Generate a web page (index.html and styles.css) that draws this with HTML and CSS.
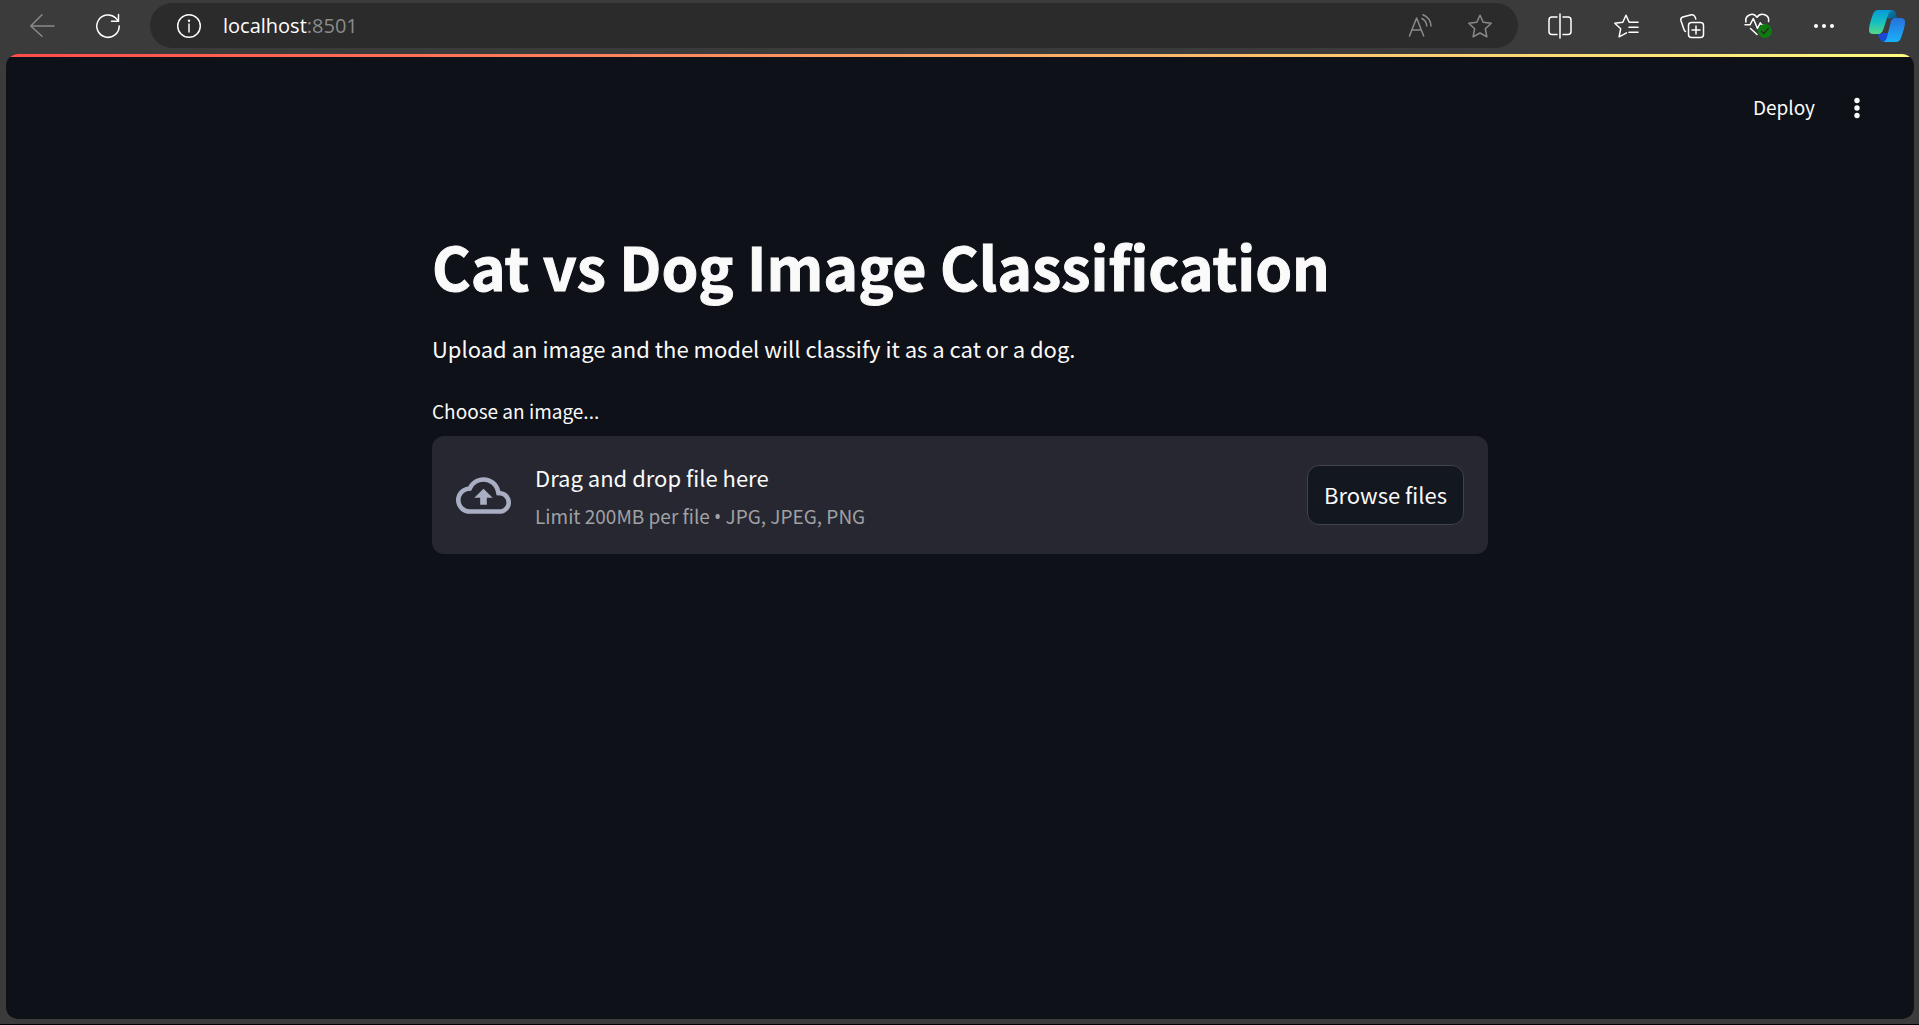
FILE: index.html
```html
<!DOCTYPE html>
<html lang="en">
<head>
<meta charset="utf-8">
<meta name="viewport" content="width=device-width, initial-scale=1">
<title>Cat vs Dog Image Classification</title>
<link rel="stylesheet" href="styles.css">
</head>
<body>
<header class="browser-bar">
  <button class="tool dim" type="button" aria-label="Back">
    <svg class="icon" viewBox="0 0 24 24"><path d="M24 12H.8M12 .8.8 12 12 22.200"/></svg>
  </button>
  <button class="tool" type="button" aria-label="Refresh">
    <svg class="icon" viewBox="0 0 24 24"><path d="M23.200 12A11.200 11.200 0 1 1 19.700 4L22.500 7M22.500.5V7.300H15.500"/></svg>
  </button>
  <div class="address">
    <svg class="icon" viewBox="0 0 24 24"><circle cx="12" cy="12" r="11.300"/><path d="M12 10v8"/><circle class="solid" cx="12" cy="6.700" r="1.200"/></svg>
    <span class="url">localhost<span class="port">:8501</span></span>
    <button class="tool in-address" type="button" aria-label="Read aloud">
      <svg class="icon" viewBox="0 0 24 24"><path d="M1.500 22 8.600 4 15.700 22M4 16H13.200M14 4.500Q18.500 7 18.800 12M15 .8Q22.500 4 23 12"/></svg>
    </button>
    <button class="tool in-address" type="button" aria-label="Add to favorites">
      <svg class="icon" viewBox="0 0 24 24"><path d="M12 1.200 15.200 8.300 23.200 9.200 17.300 14.700 18.900 22.800 12 19 5.100 22.800 6.700 14.700.8 9.200 8.800 8.300Z"/></svg>
    </button>
  </div>
  <nav class="tools" aria-label="Browser tools">
    <button class="tool" type="button" aria-label="Split screen">
      <svg class="icon" viewBox="0 0 24 24"><path d="M12 0V24M9 3H4Q1 3 1 6V17.500Q1 20.500 4 20.500H9M15 3H20Q23 3 23 6V17.500Q23 20.500 20 20.500H15"/></svg>
    </button>
    <button class="tool" type="button" aria-label="Favorites">
      <svg class="icon" viewBox="0 0 24 24"><path d="M12.500 18.800 5.100 22.800 6.700 14.700.8 9.200 8.800 8.300 12 1.200 15.200 8.300H24M15 13.200H24M15 18.200H24"/></svg>
    </button>
    <button class="tool" type="button" aria-label="Collections">
      <svg class="icon" viewBox="0 0 24 24"><rect x="8.500" y="8.500" width="15" height="15" rx="3"/><path d="M16 12V20M12 16H20M5.500 17.500Q4.500 17 4 15.500L.9 6.500Q.2 4 2.800 3L11.500.8Q14 .3 15 2.800L15.800 5"/></svg>
    </button>
    <button class="tool" type="button" aria-label="Browser essentials">
      <svg class="icon wide" viewBox="0 0 28 28"><path d="M2 10C.5 3.500 9-.5 13 5.200 17-.5 26 3 24.500 9.500M1 12.800H6L9.300 6.500 13.500 16.500 16.300 10.800 17.800 13H20M6.500 16.500 13 22.500"/><circle class="badge" cx="21" cy="19" r="7"/><path class="check" d="m17.500 19.200 2.300 2.300 4.500-5"/></svg>
    </button>
    <button class="tool" type="button" aria-label="Settings and more">
      <svg class="icon" viewBox="0 0 24 24"><g class="solid"><circle cx="4" cy="12" r="2"/><circle cx="12" cy="12" r="2"/><circle cx="20" cy="12" r="2"/></g></svg>
    </button>
    <button class="tool in-address" type="button" aria-label="Copilot">
      <svg class="copilot" viewBox="0 0 36 32">
        <defs>
          <linearGradient id="cp-left" x1="0" y1="0" x2="0" y2="1"><stop offset="0" stop-color="#079ad8"/><stop offset=".5" stop-color="#15bfc0"/><stop offset="1" stop-color="#55d985"/></linearGradient>
          <linearGradient id="cp-right" x1="0" y1="0" x2="0" y2="1"><stop offset="0" stop-color="#2870dc"/><stop offset="1" stop-color="#18b2fa"/></linearGradient>
          <linearGradient id="cp-top" x1="0" y1="0" x2="1" y2="1"><stop offset="0" stop-color="#0a86bd"/><stop offset="1" stop-color="#07557d"/></linearGradient>
        </defs>
        <path fill="url(#cp-top)" d="M18 0H23Q26 0 27 4L28 8H24Q22 8 20.500 9L18 7Z"/>
        <path fill="#1a49d6" d="M8.500 24Q13 24 14.500 23H19L18 32H15Q12 32 11 29Z"/>
        <path fill="url(#cp-left)" d="M9 0H23Q20 1 19 5L14.500 19Q13 24 9 24H4Q0 24 0 20 0 15 4 4 5.500 0 9 0Z"/>
        <path fill="url(#cp-right)" d="M26 8H32Q36 8 36 12 36 17 32 28 30.500 32 27 32H14.500Q17 31 18 27L21.500 13Q22.500 8 26 8Z"/>
      </svg>
    </button>
  </nav>
</header>

<div class="page">
  <div class="decoration"></div>
  <div class="toolbar">
    <button class="text-button" type="button">Deploy</button>
    <button class="menu-button" type="button" aria-label="Main menu">
      <svg class="menu-dots" viewBox="0 0 6 22"><circle cx="3" cy="3.500" r="2.700"/><circle cx="3" cy="11" r="2.700"/><circle cx="3" cy="18.500" r="2.700"/></svg>
    </button>
  </div>
  <main class="content">
    <h1>Cat vs Dog Image Classification</h1>
    <p class="intro">Upload an image and the model will classify it as a cat or a dog.</p>
    <label class="upload-label" for="image-file">Choose an image...</label>
    <section class="dropzone">
      <svg class="cloud" viewBox="0 0 24 24" aria-hidden="true"><path d="M19.350 10.040A7.490 7.490 0 0 0 12 4C9.110 4 6.600 5.640 5.350 8.040A5.994 5.994 0 0 0 0 14c0 3.310 2.690 6 6 6h13c2.760 0 5-2.240 5-5 0-2.640-2.050-4.780-4.650-4.960zM19 18H6c-2.210 0-4-1.790-4-4 0-2.050 1.530-3.760 3.560-3.970l1.070-.11.5-.95A5.469 5.469 0 0 1 12 6c2.620 0 4.880 1.860 5.390 4.430l.3 1.500 1.530.11A2.980 2.980 0 0 1 22 15c0 1.650-1.350 3-3 3zM8 13h2.550v3h2.900v-3H16l-4-4z"/></svg>
      <div class="instructions">
        <span class="primary">Drag and drop file here</span>
        <small class="limit">Limit 200MB per file <span class="bullet">•</span> JPG, JPEG, PNG</small>
      </div>
      <input class="file-input" id="image-file" type="file" accept=".jpg,.jpeg,.png" hidden>
      <button class="browse" type="button" onclick="document.getElementById('image-file').click()">Browse files</button>
    </section>
  </main>
</div>
</body>
</html>
```
FILE: styles.css
```css
* {
  box-sizing: border-box;
}

body {
  margin: 0;
  min-height: 100vh;
  display: flex;
  flex-direction: column;
  background: #3b3b3b;
  border-bottom: 1px solid #000;
  color: #fafafa;
  font-family: "Noto Sans CJK SC", "Noto Sans", sans-serif;
  font-size: 22px;
  line-height: 36px;
}

button {
  margin: 0;
  padding: 0;
  border: 0;
  background: none;
  color: inherit;
  font: inherit;
  cursor: pointer;
}

/* Browser toolbar */
.browser-bar {
  display: flex;
  align-items: center;
  height: 54px;
  padding: 0 2px 3px 9px;
}

.tool {
  display: flex;
  align-items: center;
  justify-content: center;
  flex: none;
  width: 66px;
  height: 45px;
  color: #fff;
}

.in-address {
  width: 60px;
}

.dim,
.address .in-address {
  color: #8a8a8a;
}

.icon {
  width: 24px;
  height: 24px;
  flex: none;
  overflow: visible;
  fill: none;
  stroke: currentColor;
  stroke-width: 1.5;
  stroke-linecap: round;
  stroke-linejoin: round;
}

.wide {
  width: 28px;
  height: 28px;
}

.icon .solid {
  fill: currentColor;
  stroke: none;
}

.icon .badge {
  fill: #0f7b0f;
  stroke: none;
}

.icon .check {
  stroke: #2b2b2b;
}

.copilot {
  width: 36px;
  height: 32px;
}

.address {
  display: flex;
  align-items: center;
  flex: 1;
  height: 45px;
  margin: 0 9px;
  padding: 0 8px 0 27px;
  border-radius: 23px;
  background: #2b2b2b;
}

.url {
  flex: 1;
  margin-left: 22px;
  color: #fff;
  font-family: "Open Sans", "Noto Sans", sans-serif;
  font-size: 20px;
}

.port {
  color: #8a8a8a;
}

.tools {
  display: flex;
}

/* App page */
.page {
  flex: 1;
  margin: 0 5px 5px 6px;
  overflow: hidden;
  border-radius: 12px;
  background: #0e1117;
}

.decoration {
  height: 3px;
  background: linear-gradient(90deg, #ff4b4b, #fffd80);
}

.toolbar {
  display: flex;
  align-items: center;
  justify-content: flex-end;
  gap: 24px;
  height: 102px;
  padding-right: 39px;
}

.text-button {
  padding-bottom: 2px;
  font-size: 19px;
  line-height: 32px;
}

.menu-button {
  display: flex;
  align-items: center;
  justify-content: center;
  width: 36px;
  height: 36px;
}

.menu-dots {
  width: 6px;
  height: 22px;
  fill: #fafafa;
}

.content {
  max-width: 1056px;
  margin: 0 auto;
  padding: 71px 0 48px;
}

h1 {
  margin: 0 0 28px;
  font-size: 59px;
  font-weight: 700;
  line-height: 72px;
  -webkit-text-stroke: 1px currentColor;
}

.intro {
  margin: 0 0 29px;
}

.upload-label {
  display: block;
  margin-bottom: 9px;
  font-size: 19px;
  line-height: 32px;
}

.dropzone {
  display: flex;
  align-items: center;
  gap: 24px;
  min-height: 118px;
  padding: 22px 24px;
  border-radius: 12px;
  background: #262730;
}

.cloud {
  flex: none;
  width: 55px;
  height: 55px;
  fill: #a9aec2;
}

.instructions {
  display: flex;
  flex-direction: column;
  gap: 5px;
  flex: 1;
}

.limit {
  color: #a0a0a5;
  font-size: 19px;
  line-height: 32px;
}

.bullet {
  font-family: "Noto Sans", sans-serif;
  line-height: 1;
}

.browse {
  height: 60px;
  padding: 0 16px 3px;
  border: 1px solid #41434a;
  border-radius: 12px;
  background: #131720;
}
```
